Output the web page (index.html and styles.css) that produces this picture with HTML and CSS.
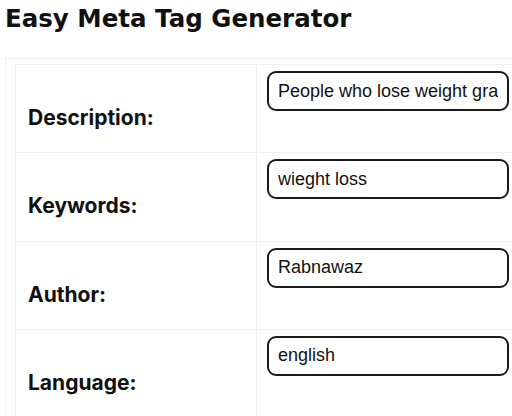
FILE: index.html
```html
<!DOCTYPE html>
<html lang="en">
<head>
<meta charset="utf-8">
<title>Easy Meta Tag Generator</title>
<link rel="stylesheet" href="styles.css">
</head>
<body>
<div class="page">
  <h1 class="title">Easy Meta Tag Generator</h1>
  <div class="panel">
    <table class="form-table">
      <tr>
        <td class="label-cell"><label class="label" for="desc">Description:</label></td>
        <td class="input-cell"><input class="field" id="desc" type="text" value="People who lose weight gradually and steadily"></td>
      </tr>
      <tr>
        <td class="label-cell"><label class="label" for="kw">Keywords:</label></td>
        <td class="input-cell"><input class="field" id="kw" type="text" value="wieght loss"></td>
      </tr>
      <tr>
        <td class="label-cell"><label class="label" for="author">Author:</label></td>
        <td class="input-cell"><input class="field" id="author" type="text" value="Rabnawaz"></td>
      </tr>
      <tr>
        <td class="label-cell"><label class="label" for="lang">Language:</label></td>
        <td class="input-cell"><input class="field" id="lang" type="text" value="english"></td>
      </tr>
    </table>
  </div>
</div>
</body>
</html>
```
FILE: styles.css
```css
html, body {
  margin: 0;
  padding: 0;
  background: #ffffff;
  overflow: hidden;
}

.page {
  padding: 4px 0 0 5px;
  width: 560px;
  font-family: Inter, "Noto Sans", sans-serif;
  color: #111111;
}

.title {
  margin: 0 0 25px 0;
  font-family: "DejaVu Sans", Verdana, sans-serif;
  font-size: 24.5px;
  font-weight: 700;
  line-height: 29px;
  letter-spacing: 0;
  color: #111111;
}

.panel {
  border: 1px solid #f0f0f0;
  padding: 5px 10px 0 9px;
  width: 505px;
}

.form-table {
  border-collapse: collapse;
  width: 505px;
}

.form-table td {
  border: 1px solid #f0f0f0;
  height: 88.3px;
  box-sizing: border-box;
  padding: 0;
  vertical-align: top;
}

.label-cell {
  width: 241px;
  padding: 41px 12px 0 12px !important;
}

.label {
  display: block;
  font-size: 21px;
  font-weight: 700;
  line-height: 24px;
  color: #111111;
}

.input-cell {
  padding: 6px 10px 0 10px !important;
}

.field {
  display: block;
  box-sizing: border-box;
  width: 242px;
  height: 40px;
  margin: 0;
  padding: 0 9px;
  border: 2px solid #1a1a1a;
  border-radius: 9px;
  font-family: "Liberation Sans", Arial, sans-serif;
  font-size: 18px;
  color: #111111;
  background: #ffffff;
  outline: none;
}
```
